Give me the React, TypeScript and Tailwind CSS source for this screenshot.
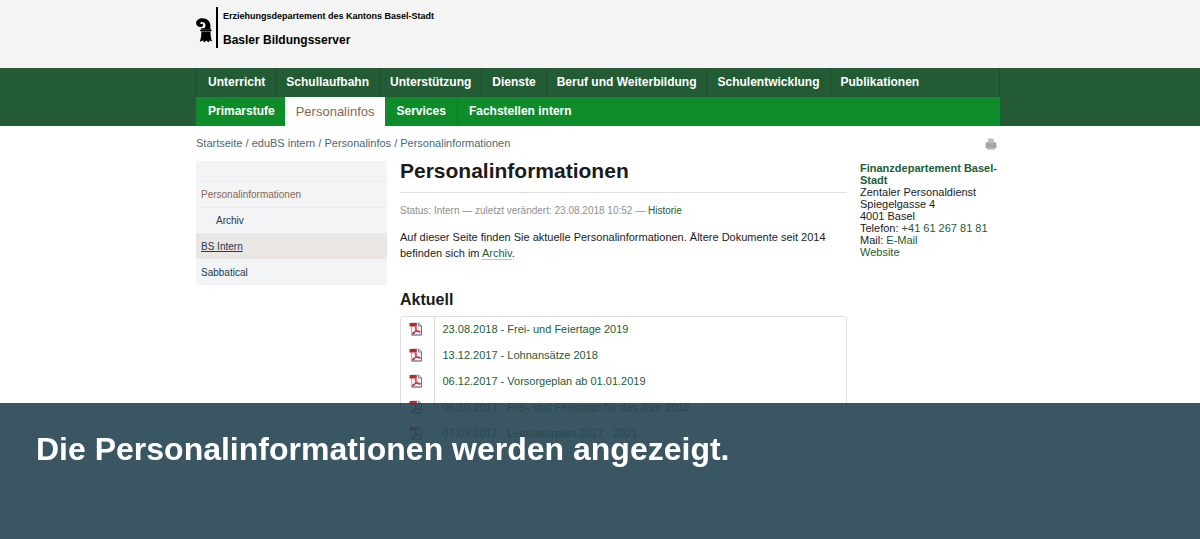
const mainNav = [
  "Unterricht",
  "Schullaufbahn",
  "Unterstützung",
  "Dienste",
  "Beruf und Weiterbildung",
  "Schulentwicklung",
  "Publikationen",
];

const crumbs = ["Startseite", "eduBS intern", "Personalinfos", "Personalinformationen"];

const documents = [
  "23.08.2018 - Frei- und Feiertage 2019",
  "13.12.2017 - Lohnansätze 2018",
  "06.12.2017 - Vorsorgeplan ab 01.01.2019",
  "06.10.2017 - Frei- und Feiertage für das Jahr 2018",
  "07.09.2017 - Legislaturplan 2017 - 2021",
];

function Crosier() {
  return (
    <svg viewBox="0 0 17 25" className="h-[25px] w-[17px]" aria-hidden="true">
      <path
        d="M7.200 11.200C9.300 9.800 10 7.600 9.200 6C8.500 4.600 6.600 3.800 5 4.200C3.900 4.700 4 5.900 5 6.100C5.700 6.100 6.100 5.900 6.300 5.500C7.700 6.700 7 8.900 4.900 9.100C2 9.300 0 7.200 .1 4.700C.3 2 3 .2 6.400 .2C11.300 .3 14.200 3.400 14.400 7.200C14.500 8.800 14.300 10.200 13.800 11.200Z"
        fill="#000"
      />
      <path
        d="M5 10.300H14.800V11.300H5zM5 11.600H14.800L15.900 12.600L14.800 13.500H5L3.900 12.600Z"
        fill="#000"
      />
      <path
        d="M5.400 13.700H14.500C14.500 17.600 15 20.600 16.200 23.600L13.700 22.600L12.400 24.400L10.300 22.600L8.200 24.400L7 22.600L3.700 23.800C4.900 20.600 5.400 17.600 5.400 13.700Z"
        fill="#000"
      />
    </svg>
  );
}

function PdfIcon() {
  return (
    <svg viewBox="0 0 14 14" className="h-3.5 w-3.5" aria-hidden="true">
      <path d="M2.500 1h7l3 3v9h-10z" fill="#f1f5fa" stroke="#a9b9cc" />
      <path d="M12.500 4v9h-10" fill="none" stroke="#587499" />
      <path d="M9.500 1v3h3z" fill="#fff" stroke="#587499" strokeWidth=".8" />
      <path d="M.5 1h7.300v3.500H.5z" fill="#cf2029" />
      <path
        d="M6.700 5.200c.9 0 .4 2.200-.3 3.700c-.7 1.600-1.800 3-2.500 3.100c-1 0-.1-1.600 2.300-2.300c2.100-.7 5.100-.7 5 .2c-.2 1-2.700-.4-3.700-1.700C6.600 7 6.100 5.200 6.700 5.200Z"
        fill="none"
        stroke="#d63a42"
        strokeWidth="1.200"
      />
    </svg>
  );
}

function PrintIcon() {
  return (
    <svg viewBox="0 0 12 12" className="h-3 w-3" aria-hidden="true">
      <path d="M3 5V.5h4.500L9 2v3z" fill="#bdbdbd" />
      <path d="M.5 5.500L1.500 4H3v1h6V4h1.500l1 1.500V10H.5z" fill="#a8a8a8" />
      <path d="M2 8h8v3.500H2z" fill="#b2b2b2" />
      <path d="M2 8.500h8" stroke="#989898" strokeWidth=".8" />
    </svg>
  );
}

export default function App() {
  return (
    <div className="min-h-screen bg-white font-['Liberation_Sans',Arial,sans-serif] text-[11px] text-[#1b1b1b]">
      <header className="bg-[#f4f4f4]">
        <div className="mx-auto flex h-[68px] max-w-[808px] items-start pt-[7px] pr-[4px]">
          <a href="#start" className="flex text-black">
            <span className="flex h-[41px] w-[22px] items-center border-r-2 border-black pt-[6px]">
              <Crosier />
            </span>
            <span className="flex flex-col pl-[5px] font-bold">
              <span className="text-[9px] leading-[18px]">
                Erziehungsdepartement des Kantons Basel-Stadt
              </span>
              <span className="pt-1.5 text-[12px] leading-[18px]">Basler Bildungsserver</span>
            </span>
          </a>
        </div>
      </header>

      <div className="bg-[#235c34] text-[12px] leading-[29px] font-bold text-white">
        <div className="mx-auto max-w-[808px] pr-[4px]">
          <nav aria-label="Hauptnavigation" className="flex border-x border-[#1c4e2b] pl-[1px]">
            {mainNav.map((item) => (
              <a
                key={item}
                href="#nav"
                className="border-r border-[#1c4e2b] px-[10px] last:border-r-0"
              >
                {item}
              </a>
            ))}
          </nav>
          <nav aria-label="Bereichsnavigation" className="flex bg-[#0e8c29] pl-[2px]">
            <a href="#primarstufe" className="px-[10px]">
              Primarstufe
            </a>
            <a
              href="#personalinfos"
              aria-current="page"
              className="bg-white px-[11px] text-[13px] font-normal text-[#87664e]"
            >
              Personalinfos
            </a>
            <a href="#services" className="border-r border-[#0b7a22] px-[11px]">
              Services
            </a>
            <a href="#fachstellen" className="px-[11px]">
              Fachstellen intern
            </a>
          </nav>
        </div>
      </div>

      <div className="mx-auto max-w-[808px] pr-[4px]">
        <div className="flex items-end justify-between pt-2 pr-[3px] text-[#4e6872]">
          <nav aria-label="Brotkrumen" className="leading-[18px]">
            {crumbs.map((crumb, i) => (
              <span key={crumb}>
                {i > 0 && " / "}
                <a href="#pfad">{crumb}</a>
              </span>
            ))}
          </nav>
          <button type="button" aria-label="Drucken" className="pb-[2px]">
            <PrintIcon />
          </button>
        </div>

        <div className="grid grid-cols-[191px_1fr_140px] items-start gap-x-[13px] pt-[9px]">
          <nav
            aria-label="Seitennavigation"
            className="flex flex-col bg-[#f2f4f6] pt-[20px] text-[10px] leading-[25px] text-[#24394a]"
          >
            <a href="#personal" className="border-t border-[#e9edf0] px-[5px] text-[#87664e]">
              Personalinformationen
            </a>
            <a href="#archiv" className="border-t border-[#e9edf0] pl-[20px]">
              Archiv
            </a>
            <a href="#bs" className="border-t border-[#e9e6e4] bg-[#e9e6e4] px-[5px] underline">
              BS Intern
            </a>
            <a href="#sabbatical" className="border-t border-[#f2f4f6] px-[5px]">
              Sabbatical
            </a>
          </nav>

          <main>
            <h1 className="border-b border-[#dedede] pb-[11px] text-[21px] leading-[20px] font-bold">
              Personalinformationen
            </h1>
            <p className="pt-[9px] text-[10px] leading-[18px] text-[#8f8f8f]">
              Status: Intern — zuletzt verändert: 23.08.2018 10:52 —{" "}
              <a href="#historie" className="text-[#235c34]">
                Historie
              </a>
            </p>
            <p className="pt-[9px] leading-[16px]">
              Auf dieser Seite finden Sie aktuelle Personalinformationen. Ältere Dokumente seit 2014
              befinden sich im{" "}
              <a href="#archiv" className="border-b border-[#b4ccb9] text-[#235c34]">
                Archiv
              </a>
              .
            </p>
            <h2 className="pt-[29px] text-[16px] leading-[20px] font-bold">Aktuell</h2>
            <div className="mt-[6px] rounded-[3px] border border-[#dedede]">
              <table className="w-full border-collapse text-[#235c34]">
                <tbody>
                  {documents.map((title) => (
                    <tr key={title} className="h-[26px]">
                      <td className="w-[33px] border-r border-[#dedede] pb-[2px] pl-[8px]">
                        <PdfIcon />
                      </td>
                      <td className="pb-[2px] pl-[8px]">
                        <a href="#dokument">{title}</a>
                      </td>
                    </tr>
                  ))}
                </tbody>
              </table>
            </div>
          </main>

          <address className="pt-px leading-[12px] not-italic">
            <a href="#departement" className="font-bold text-[#235c34]">
              Finanzdepartement Basel-Stadt
            </a>
            <br />
            Zentaler Personaldienst
            <br />
            Spiegelgasse 4<br />
            4001 Basel
            <br />
            Telefon:{" "}
            <a href="#telefon" className="text-[#235c34]">
              +41 61 267 81 81
            </a>
            <br />
            Mail:{" "}
            <a href="#mail" className="text-[#235c34]">
              E-Mail
            </a>
            <br />
            <a href="#website" className="text-[#235c34]">
              Website
            </a>
          </address>
        </div>
      </div>

      <div className="fixed inset-x-0 bottom-0 min-h-[136px] bg-[#284553]/91 px-9 py-6">
        <p className="text-[32px] leading-[44px] font-bold text-white">
          Die Personalinformationen werden angezeigt.
        </p>
      </div>
    </div>
  );
}
